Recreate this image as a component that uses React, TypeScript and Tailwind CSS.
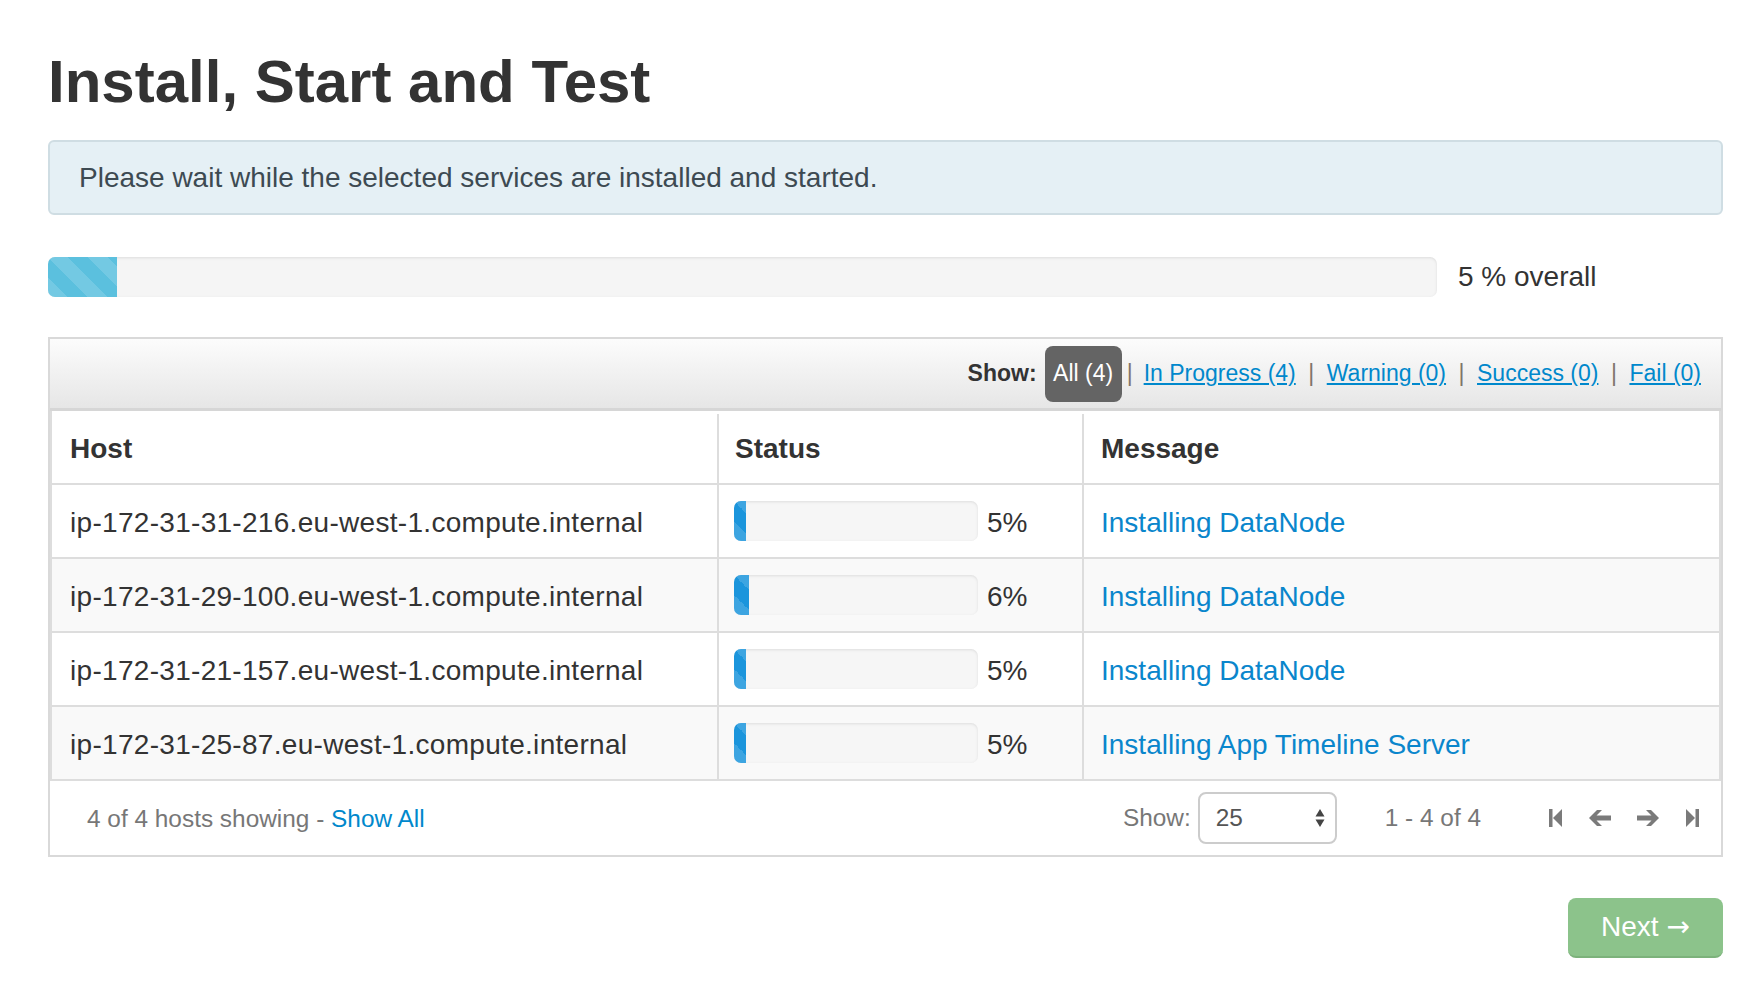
import React from "react";

const rows = [
  { host: "ip-172-31-31-216.eu-west-1.compute.internal", pct: 5, msg: "Installing DataNode" },
  { host: "ip-172-31-29-100.eu-west-1.compute.internal", pct: 6, msg: "Installing DataNode" },
  { host: "ip-172-31-21-157.eu-west-1.compute.internal", pct: 5, msg: "Installing DataNode" },
  { host: "ip-172-31-25-87.eu-west-1.compute.internal", pct: 5, msg: "Installing App Timeline Server" },
];

function Sep({ first }: { first?: boolean }) {
  return (
    <span className={first ? "ml-[5px] mr-[11px] text-[#80746b]" : "mx-[12.5px] text-[#80746b]"}>|</span>
  );
}

function FirstIcon() {
  return (
    <svg width="13" height="18" viewBox="0 0 13 18" className="fill-[#7a7a7a]">
      <rect x="0" y="0" width="3.5" height="18" />
      <polygon points="13,0 4,9 13,18" />
    </svg>
  );
}
function LastIcon() {
  return (
    <svg width="13" height="18" viewBox="0 0 13 18" className="fill-[#7a7a7a]">
      <rect x="9.5" y="0" width="3.5" height="18" />
      <polygon points="0,0 9,9 0,18" />
    </svg>
  );
}
function PrevIcon() {
  return (
    <svg width="23" height="18" viewBox="0 0 23 18" className="fill-[#7a7a7a]">
      <path d="M0 9 L8 1 L13 1 L7.5 6.5 L22 6.5 L22 11.5 L7.5 11.5 L13 17 L8 17 Z" />
    </svg>
  );
}
function NextIcon() {
  return (
    <svg width="23" height="18" viewBox="0 0 23 18" className="fill-[#7a7a7a]">
      <path d="M23 9 L15 1 L10 1 L15.5 6.5 L1 6.5 L1 11.5 L15.5 11.5 L10 17 L15 17 Z" />
    </svg>
  );
}

export default function App() {
  return (
    <div className="min-h-screen bg-white font-['Liberation_Sans',Arial,sans-serif] text-[#333]">
      <div className="pl-[48px] pr-[39px] pt-[49px]">
        <h1 className="text-[60px] leading-[65px] font-bold text-[#333]">Install, Start and Test</h1>

        <div className="mt-[26px] flex h-[75px] items-center rounded-[6px] border-2 border-[#cfdde3] bg-[#e5f0f5] pl-[29px] text-[28px] text-[#3d4a52]">
          Please wait while the selected services are installed and started.
        </div>

        <div className="mt-[41px] flex items-center">
          <div className="h-[40px] w-[1389px] overflow-hidden rounded-[7px] bg-[#f5f5f5] shadow-[inset_0_1px_3px_rgba(0,0,0,0.1)]">
            <div
              className="h-full bg-[#5bc0de] bg-[linear-gradient(45deg,rgba(255,255,255,0.15)_25%,transparent_25%,transparent_50%,rgba(255,255,255,0.15)_50%,rgba(255,255,255,0.15)_75%,transparent_75%,transparent)] bg-[length:40px_40px]"
              style={{ width: "5%" }}
            />
          </div>
          <span className="ml-[21px] text-[28px] text-[#333]">5 % overall</span>
        </div>

        <div className="mt-[39px] border-2 border-[#d9d9d9]">
          <div className="flex h-[72px] items-center justify-end border-b-[3px] border-[#d6d6d6] bg-[linear-gradient(to_bottom,#fcfcfc,#e6e6e6)] pr-[20px] text-[23px]">
            <span className="mr-[8px] font-bold text-[#333]">Show:</span>
            <span className="flex h-[56px] items-center rounded-[8px] bg-[#646464] px-[8.5px] text-white">All (4)</span>
            <Sep first />
            <a className="text-[#0088cc] underline">In Progress (4)</a>
            <Sep />
            <a className="text-[#0088cc] underline">Warning (0)</a>
            <Sep />
            <a className="text-[#0088cc] underline">Success (0)</a>
            <Sep />
            <a className="text-[#0088cc] underline">Fail (0)</a>
          </div>

          <div className="border-x-2 border-[#dddddd] text-[28px]">
            <div className="grid h-[74px] grid-cols-[665px_365px_1fr] border-b-2 border-[#dddddd] pt-[3px] font-bold">
              <div className="flex items-center pl-[18px]">Host</div>
              <div className="flex items-center border-l-2 border-[#dddddd] pl-[16px]">Status</div>
              <div className="flex items-center border-l-2 border-[#dddddd] pl-[17px]">Message</div>
            </div>
            {rows.map((r, i) => (
              <div
                key={i}
                className={
                  "grid h-[74px] grid-cols-[665px_365px_1fr] border-b-2 border-[#dddddd] " +
                  (i % 2 === 1 ? "bg-[#f9f9f9]" : "bg-white")
                }
              >
                <div className="flex items-center pl-[18px] pt-[3px] tracking-[0.3px] text-[#333]">{r.host}</div>
                <div className="flex items-center border-l-2 border-[#dddddd] pl-[15px]">
                  <div className="h-[40px] w-[244px] overflow-hidden rounded-[7px] bg-[#f6f6f6] shadow-[inset_0_1px_3px_rgba(0,0,0,0.1)]">
                    <div
                      className="h-full bg-[#1b95dc] bg-[linear-gradient(45deg,rgba(255,255,255,0.15)_25%,transparent_25%,transparent_50%,rgba(255,255,255,0.15)_50%,rgba(255,255,255,0.15)_75%,transparent_75%,transparent)] bg-[length:40px_40px]"
                      style={{ width: r.pct + "%" }}
                    />
                  </div>
                  <span className="ml-[9px] pt-[3px] text-[#333]">{r.pct}%</span>
                </div>
                <div className="flex items-center border-l-2 border-[#dddddd] pl-[17px] pt-[3px]">
                  <a className="text-[#0a86cc]">{r.msg}</a>
                </div>
              </div>
            ))}
          </div>

          <div className="flex h-[74px] items-center justify-between pl-[37px] pr-[22px] text-[24.4px] text-[#777]">
            <div className="pt-[2px]">
              4 of 4 hosts showing - <a className="text-[#0088cc]">Show All</a>
            </div>
            <div className="flex items-center">
              <span>Show:</span>
              <div className="ml-[7px] flex h-[52px] w-[139px] items-center justify-between rounded-[8px] border-2 border-[#cccccc] bg-white pl-[16px] pr-[10px] text-[#555]">
                <span>25</span>
                <svg width="10" height="20" viewBox="0 0 10 20" className="fill-[#444]">
                  <polygon points="5,1 9.5,8.5 0.5,8.5" />
                  <polygon points="0.5,11.5 9.5,11.5 5,19" />
                </svg>
              </div>
              <span className="ml-[48px]">1 - 4 of 4</span>
              <span className="ml-[68px] flex items-center">
                <FirstIcon />
              </span>
              <span className="ml-[27px] flex items-center">
                <PrevIcon />
              </span>
              <span className="ml-[24px] flex items-center">
                <NextIcon />
              </span>
              <span className="ml-[27px] flex items-center">
                <LastIcon />
              </span>
            </div>
          </div>
        </div>

        <div className="mt-[41px] flex justify-end">
          <button className="flex h-[60px] items-center rounded-[8px] border-b-2 border-[#7cb27b] bg-[#8cc38b] px-[33px] text-[28px] text-white">
            Next<span className="ml-[8px] font-['DejaVu_Sans',sans-serif]">→</span>
          </button>
        </div>
      </div>
    </div>
  );
}
